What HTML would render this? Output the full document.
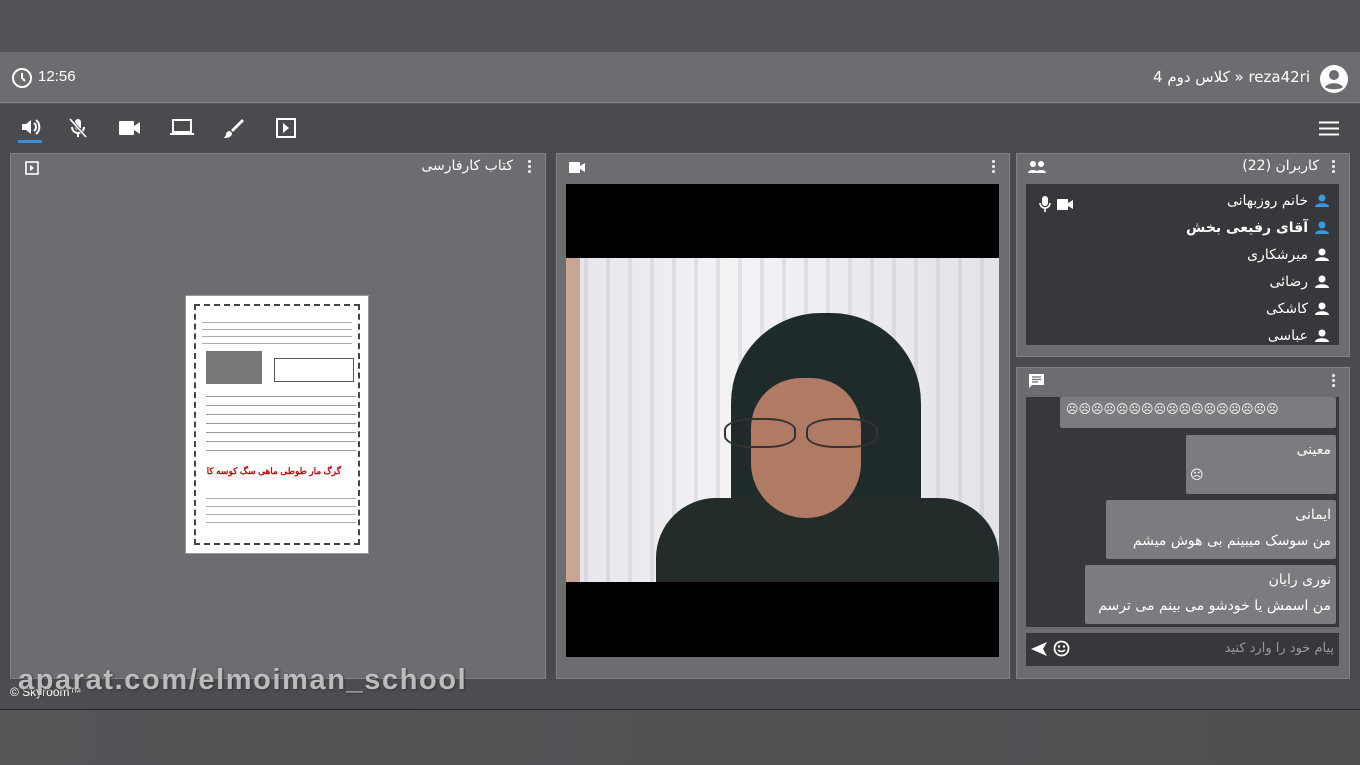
<!DOCTYPE html>
<html><head><meta charset="utf-8"><style>
*{margin:0;padding:0;box-sizing:border-box}
body{width:1360px;height:765px;overflow:hidden;background:#58585b;font-family:"Liberation Sans","Noto Sans CJK SC",sans-serif;color:#fff;position:relative}
.a{position:absolute}
.panel{position:absolute;background:#6c6c71;border:1px solid #838387}
.dark{position:absolute;background:#36383c}
.rtl{direction:rtl;font-family:"DejaVu Sans","Noto Sans CJK SC",sans-serif}
.msg{position:absolute;background:#7c7c80;border-radius:2px;direction:rtl;font-family:"DejaVu Sans",sans-serif;font-size:14px;color:#fff}
.dots{position:absolute;width:3px}
.dots i{display:block;width:3px;height:3px;background:#fff;border-radius:50%;margin-bottom:2px}
.user{position:absolute;right:22px;font-size:14px;direction:rtl;font-family:"DejaVu Sans",sans-serif}
</style></head><body>
<div class="a" style="left:0;top:0;width:1360px;height:52px;background:#525356"></div>
<div class="a" style="left:0;top:52px;width:1360px;height:51px;background:#6d6d71;border-bottom:1px solid #8a8a8e"></div>
<div class="a" style="left:0;top:104px;width:1360px;height:576px;background:#4a4b4f"></div>
<div class="a" style="left:0;top:680px;width:1360px;height:30px;background:#4c4d51;border-bottom:1px solid #222"></div>
<div class="a" style="left:0;top:711px;width:1360px;height:54px;background:linear-gradient(90deg,#555558,#504f52)"></div>

<svg class="a" style="left:11px;top:67px" width="22" height="22" viewBox="0 0 22 22"><circle cx="11" cy="11" r="9" fill="none" stroke="#fff" stroke-width="2"/><path d="M11 6v5l3 3" stroke="#fff" stroke-width="2" fill="none"/></svg>
<div class="a" style="left:38px;top:68px;font-size:15px">12:56</div>
<div class="a rtl" style="right:50px;top:68px;font-size:15px">reza42ri « کلاس دوم 4</div>
<svg class="a" style="left:1319px;top:64px" width="30" height="30" viewBox="0 0 30 30"><circle cx="15" cy="15" r="14" fill="#fff"/><circle cx="15" cy="11" r="5" fill="#6d6d71"/><path d="M6 23c3-5 15-5 18 0c-3 3-15 3-18 0z" fill="#6d6d71"/></svg>

<svg class="a" style="left:20px;top:117px" width="22" height="20" viewBox="0 0 22 20"><path d="M2 7h4l5-4v14l-5-4H2z" fill="#fff"/><path d="M14 6a5 5 0 0 1 0 8M16 3a9 9 0 0 1 0 14" stroke="#fff" stroke-width="2" fill="none"/></svg>
<div class="a" style="left:18px;top:140px;width:24px;height:3px;background:#3a8fd8"></div>
<svg class="a" style="left:68px;top:117px" width="20" height="22" viewBox="0 0 20 22"><rect x="7" y="2" width="6" height="11" rx="3" fill="#fff"/><path d="M4 10a6 6 0 0 0 12 0M10 16v4" stroke="#fff" stroke-width="2" fill="none"/><path d="M2 2l16 18" stroke="#4a4b4f" stroke-width="3"/><path d="M2 2l16 18" stroke="#fff" stroke-width="1.6"/></svg>
<svg class="a" style="left:119px;top:121px" width="22" height="14" viewBox="0 0 22 14"><rect x="0" y="0" width="15" height="14" rx="1" fill="#fff"/><path d="M15 5l6-4v12l-6-4z" fill="#fff"/></svg>
<svg class="a" style="left:170px;top:119px" width="24" height="18" viewBox="0 0 24 18"><rect x="3" y="1" width="18" height="12" fill="none" stroke="#fff" stroke-width="2"/><rect x="0" y="14" width="24" height="2" fill="#fff"/></svg>
<svg class="a" style="left:223px;top:117px" width="22" height="22" viewBox="0 0 22 22"><path d="M8 13L19 2l2 2L10 15z" fill="#fff"/><path d="M7 14c-3 0-4 2-4 4l-2 3c4 0 8-1 8-5z" fill="#fff"/></svg>
<svg class="a" style="left:276px;top:118px" width="20" height="20" viewBox="0 0 20 20"><rect x="1" y="1" width="18" height="18" fill="none" stroke="#fff" stroke-width="2"/><path d="M7 5l6 5-6 5z" fill="#fff"/></svg>
<svg class="a" style="left:1319px;top:121px" width="20" height="15" viewBox="0 0 20 15"><path d="M0 1.5h20M0 7.5h20M0 13.5h20" stroke="#fff" stroke-width="2"/></svg>

<div class="panel" style="left:10px;top:153px;width:536px;height:526px"></div>
<svg class="a" style="left:25px;top:161px" width="14" height="14" viewBox="0 0 14 14"><rect x="1" y="1" width="12" height="12" fill="none" stroke="#fff" stroke-width="1.6"/><path d="M5 4l4 3-4 3z" fill="#fff"/></svg>
<div class="a rtl" style="right:847px;top:158px;font-size:14px">کتاب کارفارسی</div>
<div class="dots" style="left:528px;top:160px"><i></i><i></i><i></i></div>
<div class="a" style="left:185px;top:295px;width:184px;height:259px;background:#fff;border:1px solid #999">
 <div class="a" style="left:8px;top:8px;width:166px;height:241px;border:2px dashed #444"></div>
 <div class="a" style="left:20px;top:55px;width:56px;height:33px;background:#777"></div>
 <div class="a" style="left:88px;top:62px;width:80px;height:24px;border:1px solid #555"></div>
 <div class="a" style="left:16px;top:20px;width:150px;height:30px;background:repeating-linear-gradient(#fff 0 6px,#aaa 6px 7px)"></div>
 <div class="a" style="left:20px;top:92px;width:150px;height:70px;background:repeating-linear-gradient(#fff 0 8px,#999 8px 9px)"></div>
 <div class="a" style="left:20px;top:170px;width:135px;height:14px;color:#c00;font-size:9px;direction:rtl;font-weight:bold">گرگ مار طوطی ماهی سگ کوسه کا</div>
 <div class="a" style="left:20px;top:195px;width:150px;height:35px;background:repeating-linear-gradient(#fff 0 7px,#aaa 7px 8px)"></div>
</div>

<div class="panel" style="left:556px;top:153px;width:454px;height:526px"></div>
<svg class="a" style="left:569px;top:162px" width="16" height="11" viewBox="0 0 16 11"><rect width="11" height="11" fill="#fff"/><path d="M11 4l5-3v9l-5-3z" fill="#fff"/></svg>
<div class="dots" style="left:992px;top:160px"><i></i><i></i><i></i></div>
<div class="a" style="left:566px;top:184px;width:433px;height:473px;background:#000"></div>
<div class="a" style="left:566px;top:258px;width:433px;height:324px;overflow:hidden;background:linear-gradient(90deg,#c9a594 0 14px,#e8e6ea 14px,#f3f2f5 40%,#e2e2e8 100%)">
 <div class="a" style="left:0;top:0;width:433px;height:324px;background:repeating-linear-gradient(90deg,rgba(0,0,0,0) 0 18px,rgba(150,150,170,.18) 18px 22px)"></div>
 <div class="a" style="left:165px;top:55px;width:190px;height:270px;border-radius:90px 90px 20px 20px;background:#1f2a2a"></div>
 <div class="a" style="left:90px;top:240px;width:343px;height:100px;border-radius:60px 60px 0 0;background:#232b2b"></div>
 <div class="a" style="left:185px;top:120px;width:110px;height:140px;border-radius:50px 50px 55px 55px;background:#b07a64"></div>
 <div class="a" style="left:158px;top:160px;width:72px;height:30px;border:2px solid #333;border-radius:40%"></div>
 <div class="a" style="left:240px;top:160px;width:72px;height:30px;border:2px solid #333;border-radius:40%"></div>
</div>

<div class="panel" style="left:1016px;top:153px;width:334px;height:204px"></div>
<svg class="a" style="left:1028px;top:161px" width="18" height="12" viewBox="0 0 18 12"><circle cx="5" cy="3" r="3" fill="#fff"/><circle cx="13" cy="3" r="3" fill="#fff"/><path d="M0 12c0-4 10-4 10 0zM8 12c0-4 10-4 10 0z" fill="#fff"/></svg>
<div class="a rtl" style="right:41px;top:158px;font-size:14px">کاربران (22)</div>
<div class="dots" style="left:1332px;top:160px"><i></i><i></i><i></i></div>
<div class="dark" style="left:1026px;top:184px;width:313px;height:161px;overflow:hidden"></div>
<svg class="a" style="left:1039px;top:196px" width="12" height="16" viewBox="0 0 12 16"><rect x="3" y="0" width="6" height="10" rx="3" fill="#fff"/><path d="M1 7a5 5 0 0 0 10 0M6 12v4" stroke="#fff" stroke-width="1.6" fill="none"/></svg>
<svg class="a" style="left:1057px;top:199px" width="16" height="11" viewBox="0 0 16 11"><rect width="11" height="11" fill="#fff"/><path d="M11 4l5-3v9l-5-3z" fill="#fff"/></svg>
<div class="user" style="top:193px;right:52px">خانم روزبهانی</div>
<div class="user" style="top:220px;right:52px;font-weight:bold">آقای رفیعی بخش</div>
<div class="user" style="top:247px;right:52px">میرشکاری</div>
<div class="user" style="top:274px;right:52px">رضائی</div>
<div class="user" style="top:301px;right:52px">کاشکی</div>
<div class="user" style="top:328px;right:52px;height:17px;overflow:hidden">عباسی</div>
<svg class="a" style="left:1315px;top:194px" width="14" height="150" viewBox="0 0 14 150">
<g fill="#3a9ae0"><circle cx="7" cy="4" r="3.5"/><path d="M0 13c0-5 14-5 14 0z"/><circle cx="7" cy="31" r="3.5"/><path d="M0 40c0-5 14-5 14 0z"/></g>
<g fill="#fff"><circle cx="7" cy="58" r="3.5"/><path d="M0 67c0-5 14-5 14 0z"/><circle cx="7" cy="85" r="3.5"/><path d="M0 94c0-5 14-5 14 0z"/><circle cx="7" cy="112" r="3.5"/><path d="M0 121c0-5 14-5 14 0z"/><circle cx="7" cy="139" r="3.5"/><path d="M0 148c0-5 14-5 14 0z"/></g></svg>

<div class="panel" style="left:1016px;top:367px;width:334px;height:312px"></div>
<svg class="a" style="left:1028px;top:373px" width="17" height="16" viewBox="0 0 17 16"><path d="M1 1h15v11H4l-3 3z" fill="#fff"/><path d="M4 4h9M4 6.5h9M4 9h6" stroke="#6c6c71" stroke-width="1.2"/></svg>
<div class="dots" style="left:1332px;top:374px"><i></i><i></i><i></i></div>
<div class="dark" style="left:1026px;top:397px;width:313px;height:230px"></div>
<div class="msg" style="left:1060px;top:397px;width:276px;height:31px"><div style="position:absolute;left:6px;top:5px;font-size:12px;letter-spacing:0px;direction:ltr">☹☹☹☹☹☹☹☹☹☹☹☹☹☹☹☹☹</div></div>
<div class="msg" style="left:1186px;top:435px;width:150px;height:59px"><div style="position:absolute;right:5px;top:7px">معینی</div><div style="position:absolute;left:4px;top:33px;font-size:13px">☹</div></div>
<div class="msg" style="left:1106px;top:500px;width:230px;height:59px"><div style="position:absolute;right:5px;top:7px">ایمانی</div><div style="position:absolute;right:5px;top:33px">من سوسک میبینم بی هوش میشم</div></div>
<div class="msg" style="left:1085px;top:565px;width:251px;height:59px"><div style="position:absolute;right:5px;top:7px">نوری رایان</div><div style="position:absolute;right:5px;top:33px">من اسمش یا خودشو می بینم می ترسم</div></div>
<div class="dark" style="left:1026px;top:633px;width:313px;height:33px"></div>
<div class="a rtl" style="right:26px;top:641px;font-size:13px;color:#9a9a9e">پیام خود را وارد کنید</div>
<svg class="a" style="left:1030px;top:641px" width="18" height="16" viewBox="0 0 18 16"><path d="M17 1L1 8l16 7-4-7z" fill="#fff"/></svg>
<svg class="a" style="left:1053px;top:640px" width="17" height="17" viewBox="0 0 17 17"><circle cx="8.5" cy="8.5" r="7" fill="none" stroke="#fff" stroke-width="1.8"/><circle cx="6" cy="6.5" r="1.2" fill="#fff"/><circle cx="11" cy="6.5" r="1.2" fill="#fff"/><path d="M5 10q3.5 3 7 0" stroke="#fff" stroke-width="1.5" fill="none"/></svg>

<div class="a" style="left:10px;top:685px;font-size:12px;color:#fff">© Skyroom™</div>
<div class="a" style="left:18px;top:664px;font-size:29px;font-weight:bold;color:rgba(210,210,214,.85);text-shadow:1px 1px 2px #333;letter-spacing:1.6px">aparat.com/elmoiman_school</div>
</body></html>
